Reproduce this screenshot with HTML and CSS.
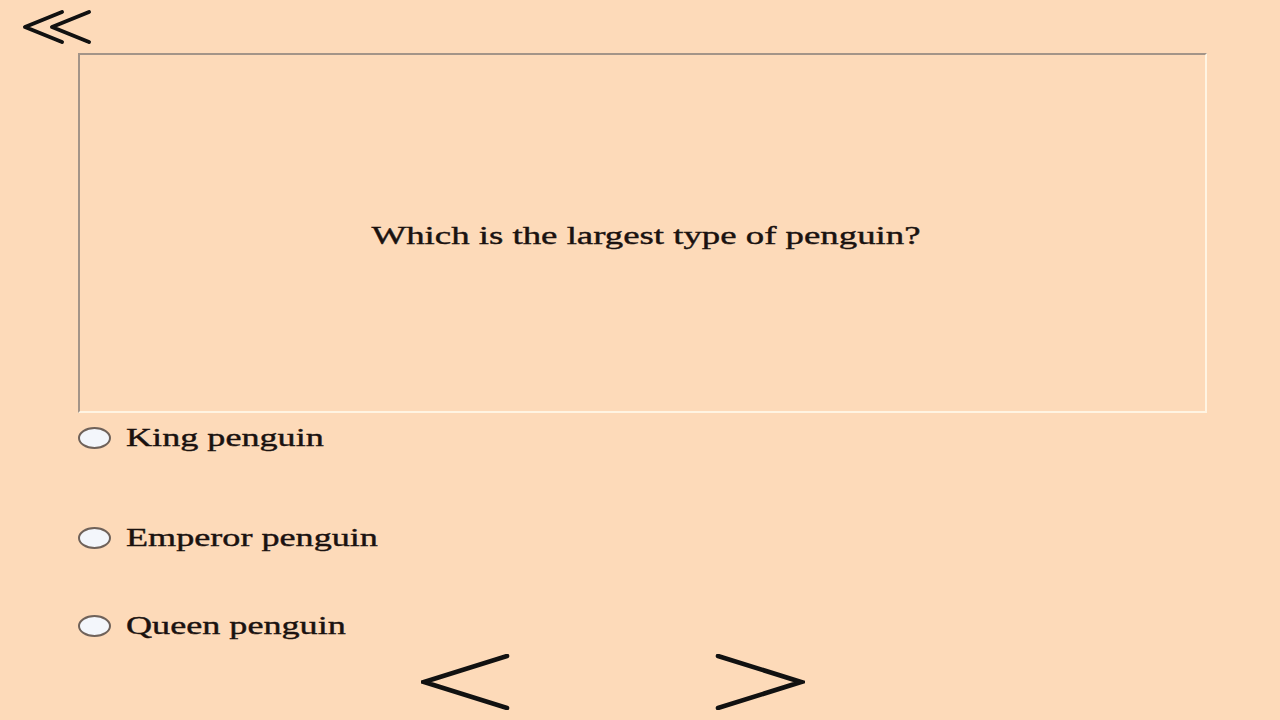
FILE: index.html
```html
<!DOCTYPE html>
<html lang="en">
<head>
<meta charset="utf-8">
<title>Quiz</title>
<link rel="stylesheet" href="styles.css">
</head>
<body>
<div class="page">
  <header class="top">
    <a class="back" href="#" aria-label="Back">
      <svg width="100" height="53" viewBox="0 0 100 53">
        <polyline points="62,12 25,27 62,42" fill="none" stroke="#111" stroke-width="4" stroke-linecap="round" stroke-linejoin="round"/>
        <polyline points="89,12 52,27 89,42" fill="none" stroke="#111" stroke-width="4" stroke-linecap="round" stroke-linejoin="round"/>
      </svg>
    </a>
  </header>
  <section class="question-box">
    <p class="question"><span class="stretch">Which is the largest type of penguin?</span></p>
  </section>
  <ul class="options">
    <li class="option"><span class="radio"></span><span class="label">King penguin</span></li>
    <li class="option"><span class="radio"></span><span class="label">Emperor penguin</span></li>
    <li class="option"><span class="radio"></span><span class="label">Queen penguin</span></li>
  </ul>
  <nav class="nav">
    <a class="nav-btn" href="#" aria-label="Previous">
      <svg width="90" height="56" viewBox="0 0 90 56">
        <polyline points="86,2 3,28 86,54" fill="none" stroke="#111" stroke-width="4.6" stroke-linecap="round"/>
      </svg>
    </a>
    <a class="nav-btn" href="#" aria-label="Next">
      <svg width="90" height="56" viewBox="0 0 90 56">
        <polyline points="3,2 86,28 3,54" fill="none" stroke="#111" stroke-width="4.6" stroke-linecap="round"/>
      </svg>
    </a>
  </nav>
</div>
</body>
</html>
```
FILE: styles.css
```css
* { box-sizing: border-box; }
html, body {
  margin: 0;
  padding: 0;
  background: #fddab9;
  width: 1280px;
  height: 720px;
  overflow: hidden;
  font-family: "Liberation Serif", "Times New Roman", serif;
  color: #1a1210;
}
.page {
  display: flex;
  flex-direction: column;
}
.top {
  height: 53px;
  display: flex;
}
.back {
  display: block;
  width: 100px;
  height: 53px;
}
.back svg { display: block; }
.question-box {
  margin-left: 78px;
  width: 1129px;
  height: 360px;
  border-top: 2px solid #a39488;
  border-left: 2px solid #a39488;
  border-right: 2px solid #fff4e2;
  border-bottom: 2px solid #fff4e2;
  display: flex;
  align-items: center;
  justify-content: center;
}
.question {
  margin: 0 0 0 6px;
  padding-top: 6px;
  font-size: 26px;
  -webkit-text-stroke: 0.4px #1a1210;
}
.stretch {
  display: inline-block;
  transform: scaleX(1.415);
  transform-origin: center;
}
.options {
  list-style: none;
  margin: 0;
  padding: 0 0 0 78px;
  display: flex;
  flex-direction: column;
}
.option {
  height: 30px;
  display: flex;
  align-items: center;
}
.option:nth-child(1) { margin-top: 10px; }
.option:nth-child(2) { margin-top: 70px; }
.option:nth-child(3) { margin-top: 58px; }
.radio {
  width: 33px;
  height: 22px;
  border: 2px solid #6f625a;
  border-radius: 50%;
  background: #f3f6fb;
  flex: none;
}
.label {
  display: inline-block;
  margin-left: 15px;
  font-size: 26px;
  transform: scaleX(1.39);
  transform-origin: left center;
  -webkit-text-stroke: 0.4px #1a1210;
  line-height: 30px;
}
.nav {
  display: flex;
  margin-top: 13px;
  padding-left: 421px;
  gap: 204px;
}
.nav-btn { display: block; width: 90px; height: 56px; }
.nav-btn svg { display: block; }
```
